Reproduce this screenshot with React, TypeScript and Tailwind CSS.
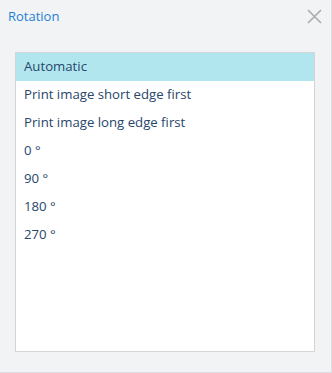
import { useState } from 'react';

const OPTIONS = [
  'Automatic',
  'Print image short edge first',
  'Print image long edge first',
  '0 °',
  '90 °',
  '180 °',
  '270 °',
];

export default function App() {
  const [selected, setSelected] = useState(0);

  return (
    <div
      className="w-[332px] h-[373px] bg-[#f2f3f5] border-r border-b border-[#dcdde0] flex flex-col"
      style={{ fontFamily: '"Open Sans", "Noto Sans", sans-serif' }}
    >
      {/* Header */}
      <div className="flex items-center justify-between h-[33px] pl-[8px] pr-[9px]">
        <span className="text-[13px] text-[#1f7fd6]">Rotation</span>
        <svg width="15" height="15" viewBox="0 0 15 15" className="text-[#a9abad]">
          <path d="M1 1L14 14M14 1L1 14" stroke="currentColor" strokeWidth="1.6" />
        </svg>
      </div>

      {/* Options list */}
      <div className="mt-[19px] ml-[15px] w-[300px] h-[300px] bg-white border border-[#d3d4d6]">
        {OPTIONS.map((opt, i) => (
          <div
            key={opt}
            onClick={() => setSelected(i)}
            className={
              'h-[28px] flex items-center pl-[8px] text-[13.2px] text-[#28466a] cursor-default ' +
              (i === selected ? 'bg-[#b1e6ef]' : '')
            }
          >
            {opt}
          </div>
        ))}
      </div>
    </div>
  );
}
